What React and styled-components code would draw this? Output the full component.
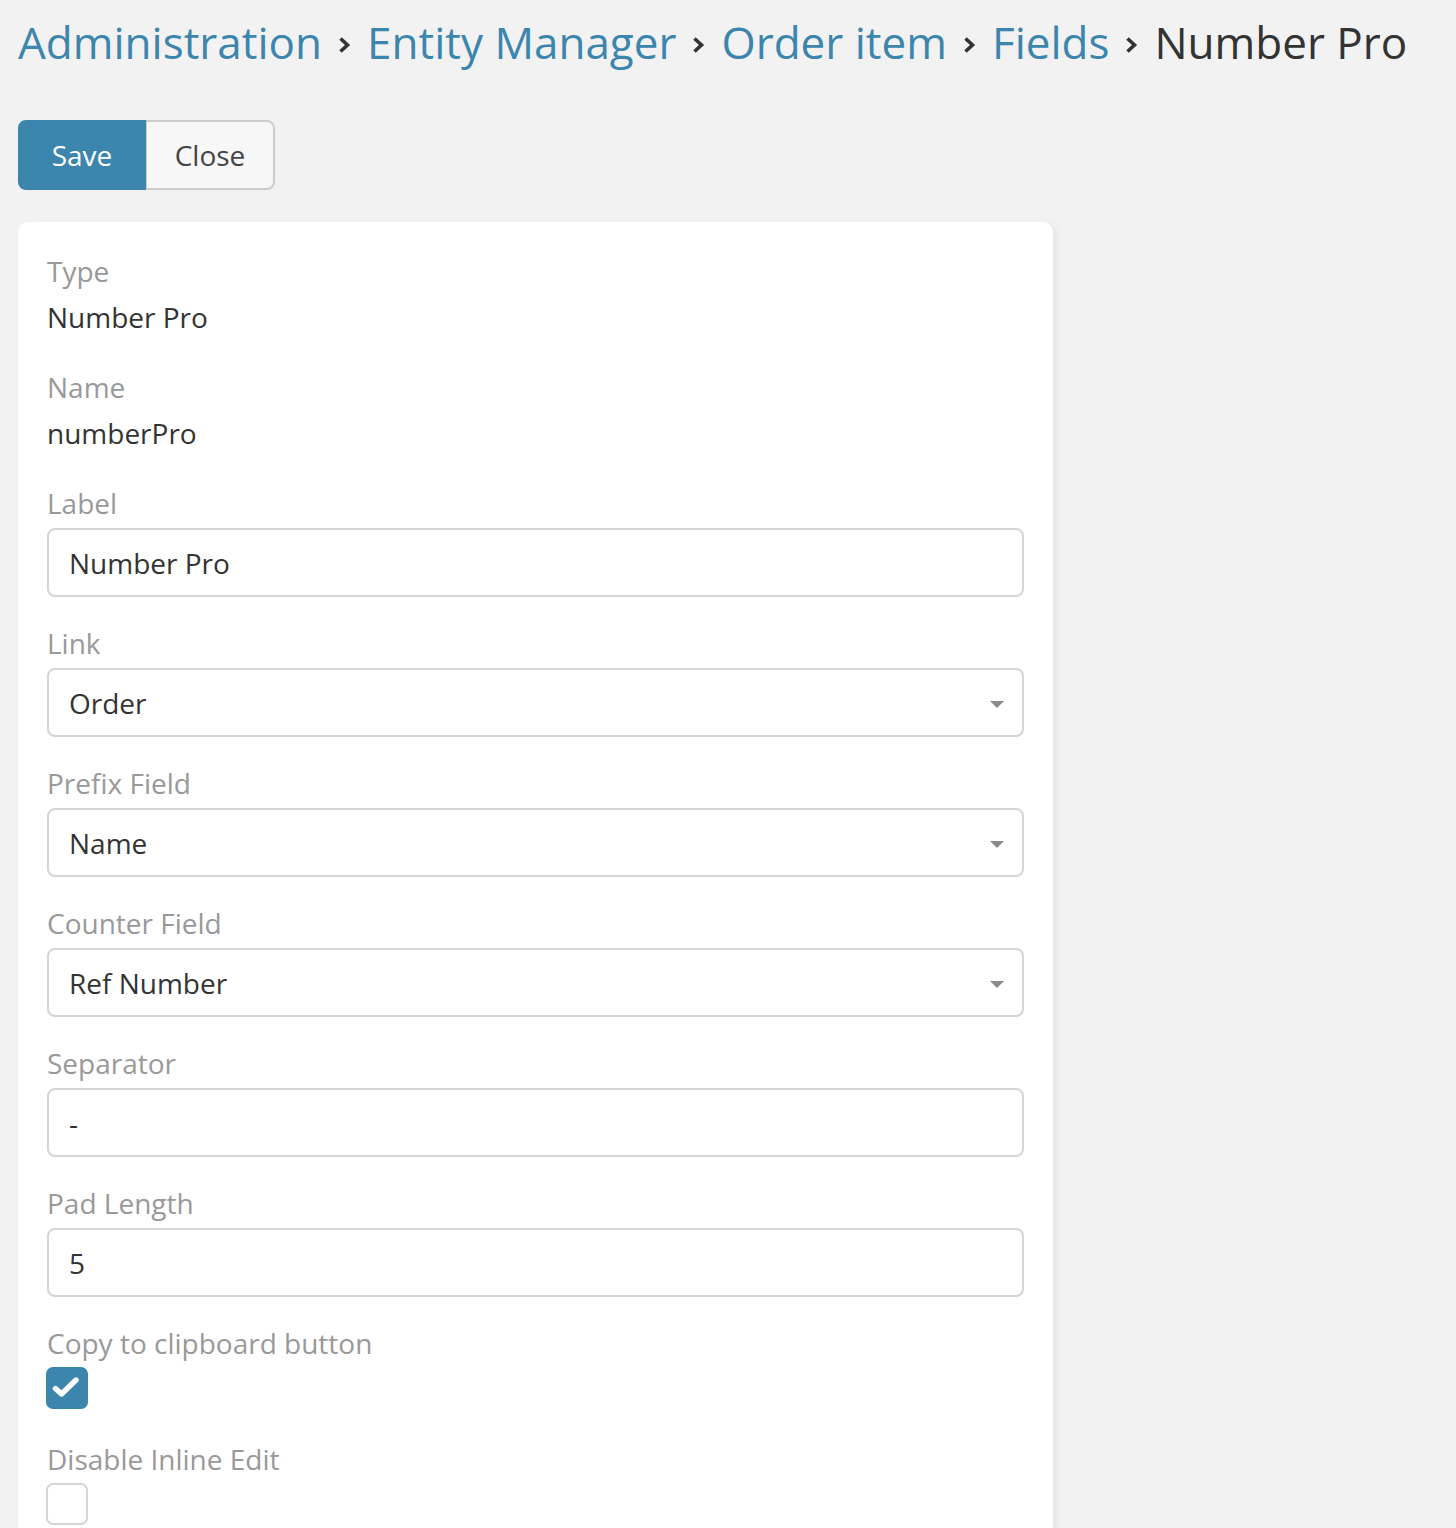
import React from "react";
import styled, { createGlobalStyle } from "styled-components";

const Global = createGlobalStyle`
  html, body { margin: 0; padding: 0; background: #f2f2f2; }
  body { font-family: "Open Sans", "Noto Sans", sans-serif; color: #333; }
  * { box-sizing: border-box; }
`;

const Page = styled.div`
  padding: 7px 18px 0;
  width: 1456px;
  min-height: 1528px;
  background: #f2f2f2;
`;

const Breadcrumb = styled.div`
  display: flex;
  align-items: center;
  gap: 16px;
  height: 70px;
  font-size: 44px;
  line-height: 70px;
  white-space: nowrap;
`;

const Crumb = styled.span`
  color: ${(p) => (p.$current ? "#333" : "#3c85ad")};
`;

const Chevron = styled.svg`
  width: 13px;
  height: 18px;
  margin-top: 6px;
  flex: none;
`;

const ButtonRow = styled.div`
  display: flex;
  margin-top: 43px;
`;

const Button = styled.button`
  height: 70px;
  width: ${(p) => p.$w}px;
  font-family: inherit;
  font-size: 28px;
  border: 2px solid ${(p) => (p.$primary ? "#3c85ad" : "#cccccc")};
  background: ${(p) => (p.$primary ? "#3c85ad" : "#f7f7f7")};
  color: ${(p) => (p.$primary ? "#fff" : "#444")};
  border-radius: ${(p) => (p.$primary ? "8px 0 0 8px" : "0 8px 8px 0")};
  ${(p) => (!p.$primary ? "border-left-width: 1px;" : "")}
  padding: 0;
`;

const Panel = styled.div`
  margin-top: 32px;
  width: 1035px;
  background: #fff;
  border-radius: 10px 10px 0 0;
  padding: 29px 29px 2px 28px;
  box-shadow: 6px 0 8px -4px rgba(0, 0, 0, 0.08);
`;

const Cell = styled.div`
  display: flex;
  flex-direction: column;
  align-items: flex-start;
  margin-bottom: ${(p) => p.$mb}px;
`;

const Label = styled.div`
  font-size: 28px;
  line-height: 40px;
  height: 40px;
  color: #999;
  padding-left: 1px;
  margin-bottom: ${(p) => p.$gap}px;
`;

const Value = styled.div`
  font-size: 28px;
  line-height: 40px;
  color: #333;
  padding-left: 1px;
`;

const InputBox = styled.div`
  position: relative;
  align-self: stretch;
  height: 69px;
  margin-left: 1px;
  border: 2px solid #d4d6d6;
  border-radius: 8px;
  padding: 0 20px;
  display: flex;
  align-items: center;
  font-size: 28px;
  color: #333;
`;

const Caret = styled.span`
  position: absolute;
  right: 18px;
  top: 31px;
  width: 0;
  height: 0;
  border-left: 7px solid transparent;
  border-right: 7px solid transparent;
  border-top: 7px solid #8a8a8a;
`;

const Check = styled.div`
  width: 42px;
  height: 42px;
  border-radius: 7px;
  border: 2px solid ${(p) => (p.$on ? "#3c85ad" : "#d4d6d6")};
  background: ${(p) => (p.$on ? "#3c85ad" : "#fff")};
  display: flex;
  align-items: center;
  justify-content: center;
`;

const ChevronIcon = () => (
  <Chevron viewBox="0 0 13 18">
    <polyline points="2.5,2.5 9.5,9 2.5,15.5" fill="none" stroke="#333" strokeWidth="3.6" strokeLinejoin="miter" />
  </Chevron>
);

const StaticField = ({ label, value }) => (
  <Cell $mb={30}>
    <Label $gap={6}>{label}</Label>
    <Value>{value}</Value>
  </Cell>
);

const InputField = ({ label, value, select }) => (
  <Cell $mb={26}>
    <Label $gap={5}>{label}</Label>
    <InputBox>
      {value}
      {select && <Caret />}
    </InputBox>
  </Cell>
);

const CheckField = ({ label, on }) => (
  <Cell $mb={30}>
    <Label $gap={4}>{label}</Label>
    <Check $on={on}>
      {on && (
        <svg width="38" height="38" viewBox="0 0 38 38">
          <polyline points="7.5,19.5 13.5,25 28,11" fill="none" stroke="#fff" strokeWidth="5.4" strokeLinecap="round" strokeLinejoin="round" />
        </svg>
      )}
    </Check>
  </Cell>
);

export default function App() {
  const crumbs = ["Administration", "Entity Manager", "Order item", "Fields"];
  return (
    <Page>
      <Global />
      <Breadcrumb>
        {crumbs.map((c) => (
          <React.Fragment key={c}>
            <Crumb>{c}</Crumb>
            <ChevronIcon />
          </React.Fragment>
        ))}
        <Crumb $current>Number Pro</Crumb>
      </Breadcrumb>
      <ButtonRow>
        <Button $primary $w={128}>Save</Button>
        <Button $w={129}>Close</Button>
      </ButtonRow>
      <Panel>
        <StaticField label="Type" value="Number Pro" />
        <StaticField label="Name" value="numberPro" />
        <InputField label="Label" value="Number Pro" />
        <InputField label="Link" value="Order" select />
        <InputField label="Prefix Field" value="Name" select />
        <InputField label="Counter Field" value="Ref Number" select />
        <InputField label="Separator" value="-" />
        <InputField label="Pad Length" value="5" />
        <CheckField label="Copy to clipboard button" on />
        <CheckField label="Disable Inline Edit" />
      </Panel>
    </Page>
  );
}
